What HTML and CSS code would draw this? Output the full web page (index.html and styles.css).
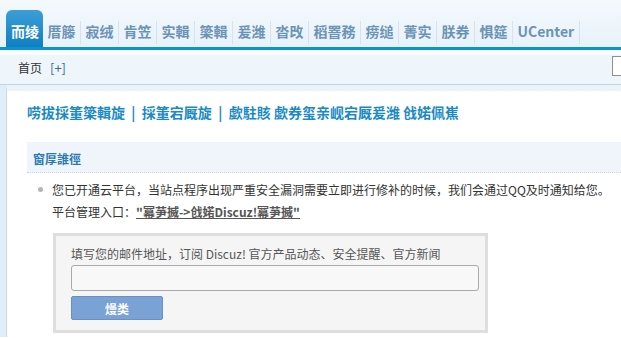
FILE: index.html
```html
<!DOCTYPE html>
<html>
<head>
  <meta charset="utf-8">
  <title>Discuz! Admin</title>
  <link rel="stylesheet" href="styles.css">
</head>
<body>
  <div class="header">
    <ul class="nav">
      <li class="active"><a href="#">而绫</a></li>
      <li><a href="#">厝籐</a></li>
      <li><a href="#">寂绒</a></li>
      <li><a href="#">肯笠</a></li>
      <li><a href="#">实輯</a></li>
      <li><a href="#">簗輯</a></li>
      <li><a href="#">爰潍</a></li>
      <li><a href="#">沓攺</a></li>
      <li><a href="#">稻罯務</a></li>
      <li><a href="#">痨缒</a></li>
      <li><a href="#">菁实</a></li>
      <li><a href="#">朕券</a></li>
      <li><a href="#">惧筵</a></li>
      <li><a href="#">UCenter</a></li>
    </ul>
  </div>

  <div class="subbar">
    <span class="crumb">首页</span>
    <a class="add" href="#">[+]</a>
    <input class="search" type="text">
  </div>

  <div class="main">
    <div class="content">
      <h2 class="title">唠拔採箽簗輯旋 &nbsp;|&nbsp; 採箽宕厩旋 &nbsp;|&nbsp; 歔駐賅 歔券玺亲岘宕厩爰潍 戗婼佩嶣</h2>

      <div class="section">
        <h3 class="section-head">窗厚誰徑</h3>
        <ul class="tips">
          <li>您已开通云平台，当站点程序出现严重安全漏洞需要立即进行修补的时候，我们会通过QQ及时通知给您。<br>
            平台管理入口：<a class="link" href="#">"冪芛搣-&gt;戗婼Discuz!冪芛搣"</a></li>
        </ul>

        <div class="subscribe">
          <p>填写您的邮件地址，订阅 Discuz! 官方产品动态、安全提醒、官方新闻</p>
          <input class="email" type="text">
          <button class="btn">熳类</button>
        </div>
      </div>
    </div>
  </div>
</body>
</html>
```

FILE: styles.css
```css
body {
  margin: 0;
  font-family: "Noto Sans CJK SC", "Liberation Sans", sans-serif;
  font-size: 12px;
  color: #333;
  background: #fff;
}
a {
  text-decoration: none;
}

/* top tabs */
.header {
  height: 47px;
  background: linear-gradient(#f4f9fd, #e8f2fa);
  border-bottom: 3px solid #0b94c9;
  padding-left: 6px;
  display: flex;
  align-items: flex-end;
}
.nav {
  display: flex;
  list-style: none;
  margin: 0;
  padding: 0;
}
.nav li {
  display: flex;
  align-items: center;
}
.nav li a {
  display: block;
  height: 31px;
  padding: 6px 4.5px 0;
  line-height: 31px;
  font-size: 14px;
  font-weight: bold;
  color: #6a93b5;
}
.nav li::after {
  content: "";
  width: 1px;
  height: 23px;
  margin-top: 8px;
  background: #d3e3ef;
}
.nav li.active::after {
  display: none;
}
.nav li.active a {
  padding: 6px 4px 0 5px;
  color: #fff;
  border-radius: 6px 6px 0 0;
  background: linear-gradient(#3c9ed6, #0f7fc1);
}

/* breadcrumb bar */
.subbar {
  height: 33px;
  background: linear-gradient(#fafdff 0, #fafdff 5px, #eef6fb 5px);
  border-bottom: 1px solid #bcd3e1;
  padding-left: 18px;
  display: flex;
  align-items: center;
  padding-top: 1px;
}
.crumb {
  color: #333;
}
.add {
  margin-left: 8px;
  color: #3c6a9a;
  font-size: 13px;
}
.search {
  margin-left: auto;
  margin-top: -4px;
  width: 8px;
  height: 18px;
  padding: 0;
  border: 1px solid #8e8e8e;
  border-right: none;
  background: #fff;
}

/* main area */
.main {
  border-left: 6px solid #e0eef9;
}
.content {
  border-left: 1px solid #c6dcec;
  border-top: 6px solid #eaf3fa;
  padding: 11px 0 4px 20px;
}
.title {
  margin: 0;
  font-size: 14px;
  line-height: 20px;
  color: #1a8ac6;
}
.section {
  margin-top: 20px;
}
.section-head {
  margin: 0;
  height: 30px;
  padding: 0 6px;
  background: #eff5fb;
  border-bottom: 1px dotted #c9d8e4;
  font-size: 12px;
  line-height: 34px;
  color: #2a78b4;
}
.tips {
  margin: 6px 0 0;
  padding: 0 0 0 25px;
  line-height: 22px;
  color: #333;
}
.tips li {
  list-style: none;
  position: relative;
}
.tips li::before {
  content: "";
  position: absolute;
  left: -14px;
  top: 8px;
  width: 5px;
  height: 5px;
  border-radius: 50%;
  background: #b5b5b5;
}
.link {
  font-weight: bold;
  color: #555;
  text-decoration: underline;
}
.subscribe {
  width: 414px;
  margin: 10px 0 0 26px;
  padding: 8px 0 10px 15px;
  border: 3px solid #dedede;
  background: #f5f5f5;
}
.subscribe p {
  margin: 0 0 1px;
  line-height: 20px;
  color: #555;
}
.email {
  display: block;
  box-sizing: border-box;
  width: 408px;
  height: 26px;
  border: 1px solid #a9a9a9;
  border-radius: 3px;
  background: #f8f8f8;
}
.btn {
  display: block;
  margin-top: 5px;
  width: 92px;
  height: 24px;
  border: 1px solid #6790c6;
  border-radius: 2px;
  background: #7ba2d4;
  color: #fff;
  font-family: inherit;
  font-size: 12px;
  font-weight: bold;
}
```
